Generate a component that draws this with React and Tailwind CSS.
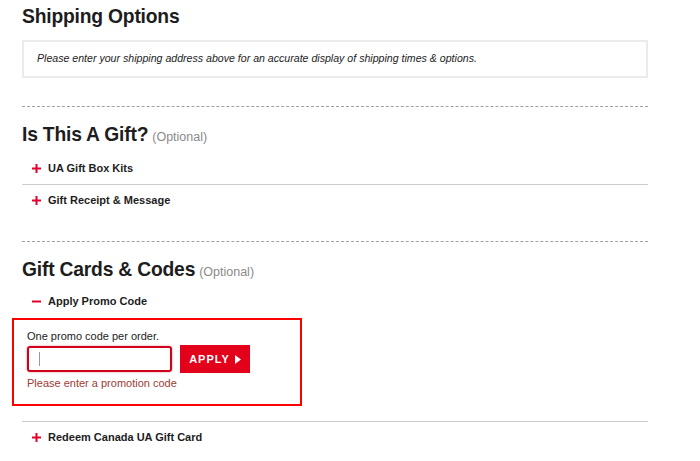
import React from "react";

const Plus = () => (
    <svg width="9" height="9" viewBox="0 0 9 9" className="block">
        <rect x="0" y="3.5" width="9" height="2" fill="#e4002b" />
        <rect x="3.5" y="0" width="2" height="9" fill="#e4002b" />
    </svg>
);

const Minus = () => (
    <svg width="9" height="9" viewBox="0 0 9 9" className="block">
        <rect x="0" y="3.5" width="9" height="2" fill="#e4002b" />
    </svg>
);

const Row = ({ icon, label }) => (
    <div className="h-[31px] flex items-center">
        <div className="w-[26px] flex justify-center pl-[2px]">{icon}</div>
        <span className="text-[11px] font-bold text-[#1d1d1d]">{label}</span>
    </div>
);

const Heading = ({ title, optional, className = "" }) => (
    <h2 className={`h-[24px] leading-[24px] text-[19.3px] font-bold text-[#1d1d1d] tracking-[-0.2px] ${className}`}>
        {title}
        {optional && (
            <span className="ml-[4px] text-[12.5px] font-normal text-[#8a8a8a] tracking-normal">(Optional)</span>
        )}
    </h2>
);

const App = () => {
    return (
        <div className="min-h-screen bg-white font-['Liberation_Sans',Arial,sans-serif]">
            <div className="pl-[22px] w-[648px] pt-[5px]">
                {/* Shipping */}
                <Heading title="Shipping Options" />
                <div className="mt-[11px] h-[38px] border-2 border-[#ebebeb] flex items-center pl-[13px]">
                    <p className="text-[10.6px] italic text-[#222]">
                        Please enter your shipping address above for an accurate display of shipping times &amp; options.
                    </p>
                </div>

                <div className="mt-[28px] border-t border-dashed border-[#a0a0a0]" />

                {/* Gift */}
                <Heading title="Is This A Gift?" optional className="mt-[16px]" />
                <div className="mt-[6px]">
                    <Row icon={<Plus />} label="UA Gift Box Kits" />
                    <div className="border-t border-[#cccccc]" />
                    <Row icon={<Plus />} label="Gift Receipt & Message" />
                </div>

                <div className="mt-[25px] border-t border-dashed border-[#a0a0a0]" />

                {/* Gift cards */}
                <Heading title="Gift Cards & Codes" optional className="mt-[16px]" />
                <div className="mt-[4px]">
                    <Row icon={<Minus />} label="Apply Promo Code" />
                </div>

                <div className="mt-[1px] -ml-[10px] w-[290px] h-[88px] border-2 border-[#ff0000] pl-[13px] pt-[9px]">
                    <p className="text-[11px] leading-[14px] text-[#222]">One promo code per order.</p>
                    <div className="mt-[2px] flex items-center gap-[8px]">
                        <div className="w-[145px] h-[26px] border-2 border-[#d0021b] rounded-[3px] shadow-[0_0_2px_rgba(208,2,27,0.5)] flex items-center pl-[10px]">
                            <div className="w-px h-[14px] bg-[#999]" />
                        </div>
                        <button className="w-[70px] h-[28px] bg-[#e2001a] text-white text-[11px] font-bold tracking-[1px] flex items-center justify-center gap-[5px]">
                            APPLY
                            <svg width="6" height="9" viewBox="0 0 6 9">
                                <path d="M0 0 L6 4.5 L0 9 Z" fill="#fff" />
                            </svg>
                        </button>
                    </div>
                    <p className="mt-[3px] text-[11px] leading-[14px] text-[#9e3b36]">Please enter a promotion code</p>
                </div>

                <div className="mt-[15px] border-t border-[#cccccc]" />
                <Row icon={<Plus />} label="Redeem Canada UA Gift Card" />
            </div>
        </div>
    );
};

export default App;
